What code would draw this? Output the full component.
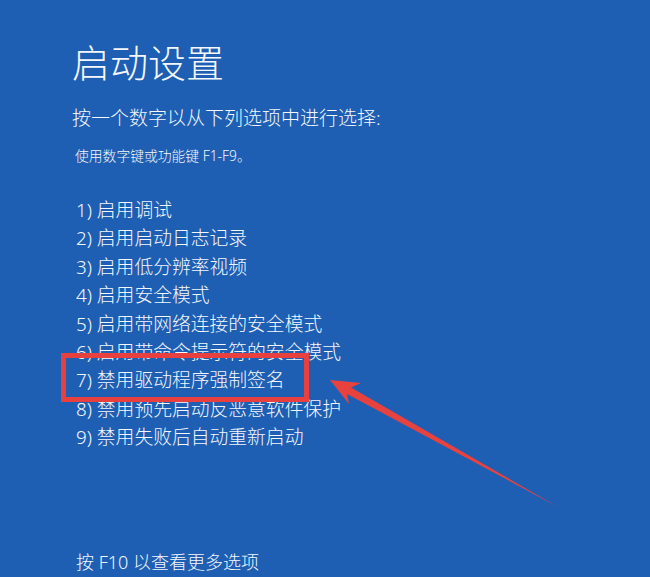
import React from 'react';

const options = [
  '1) 启用调试',
  '2) 启用启动日志记录',
  '3) 启用低分辨率视频',
  '4) 启用安全模式',
  '5) 启用带网络连接的安全模式',
  '6) 启用带命令提示符的安全模式',
  '7) 禁用驱动程序强制签名',
  '8) 禁用预先启动反恶意软件保护',
  '9) 禁用失败后自动重新启动',
];

const font = { fontFamily: '"Noto Sans", "Noto Sans CJK SC", sans-serif' };

// Red annotation arrow pointing at option 7
const Arrow: React.FC = () => (
  <svg className="absolute inset-0 pointer-events-none" width="650" height="577" viewBox="0 0 650 577">
    <polygon
      points="330,380 361,383 351,387.5 558,507 347,394 349,404"
      fill="#e8423f"
    />
  </svg>
);

export default function App() {
  return (
    <div
      className="relative w-[650px] h-[577px] overflow-hidden bg-[#1e5fb3] text-[#f4f7fc] font-light pl-[72px] pt-[40px]"
      style={font}
    >
      <h1 className="text-[38px] leading-[44px] font-light">启动设置</h1>
      <p className="mt-[22px] text-[19px] leading-[24px]">按一个数字以从下列选项中进行选择:</p>
      <p className="mt-[17px] text-[13.8px] leading-[18px] pl-[3px]">使用数字键或功能键 F1-F9。</p>

      <ul className="mt-[31px] pl-[4px]">
        {options.map((opt) => (
          <li key={opt} className="text-[18.8px] leading-[28.4px]">
            {opt}
          </li>
        ))}
      </ul>

      <p className="mt-[96px] text-[18px] leading-[28px] pl-[4px]">按 F10 以查看更多选项</p>

      <div className="absolute left-[61px] top-[353px] w-[248px] h-[49px] border-[5px] border-[#e8403f]" />
      <Arrow />
    </div>
  );
}
